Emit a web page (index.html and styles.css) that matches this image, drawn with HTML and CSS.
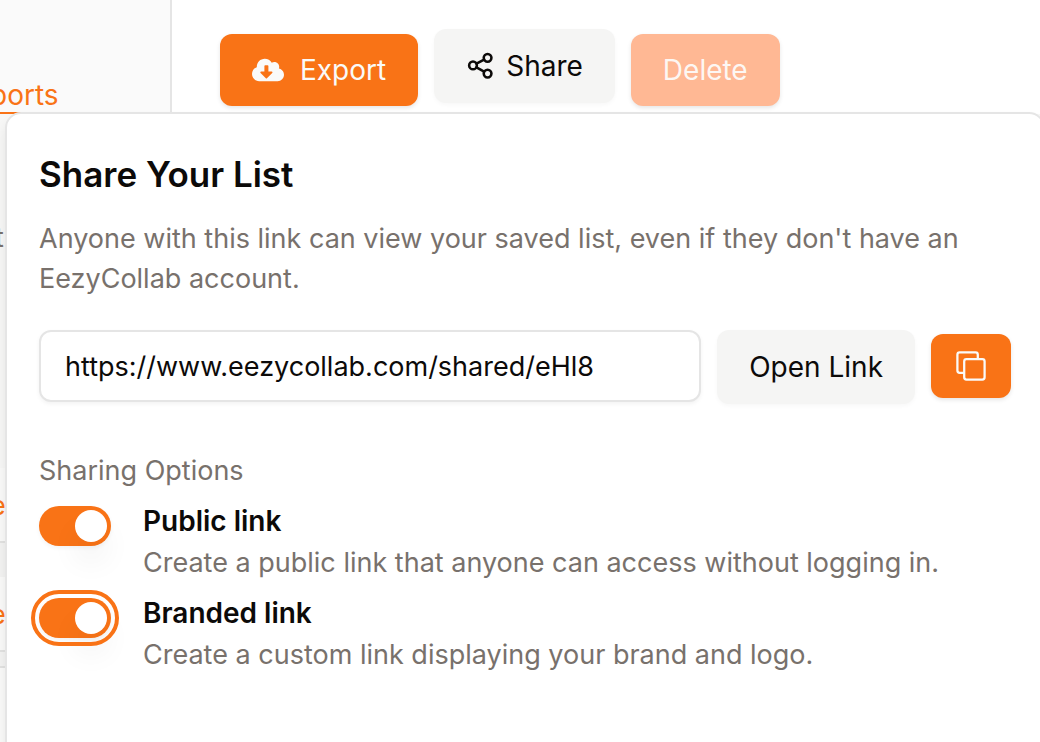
FILE: index.html
```html
<!DOCTYPE html>
<html lang="en">
<head>
<meta charset="utf-8">
<title>Share Your List</title>
<link rel="stylesheet" href="styles.css">
</head>
<body>
<div class="page">
  <header class="topbar">
    <nav class="tabs"><a class="tab" href="#">ports</a></nav>
    <div class="actions">
      <button class="btn btn-primary" type="button">
        <svg class="icon-cloud" viewBox="0 0 640 512" aria-hidden="true"><path fill="currentColor" d="M537.600 226.600c4.100-10.700 6.400-22.400 6.400-34.600 0-53-43-96-96-96-19.700 0-38.100 6-53.300 16.200C367 64.200 315.300 32 256 32c-88.400 0-160 71.600-160 160 0 2.700.1 5.400.2 8.100C40.200 219.800 0 273.200 0 336c0 79.500 64.500 144 144 144h368c70.700 0 128-57.300 128-128 0-61.900-44-113.600-102.400-125.400zm-132.900 88.700L299.300 420.700c-6.200 6.200-16.400 6.200-22.600 0L171.300 315.300c-10.100-10.100-2.900-27.300 11.300-27.300H248V176c0-8.800 7.200-16 16-16h48c8.800 0 16 7.200 16 16v112h65.400c14.200 0 21.400 17.200 11.300 27.300z"/></svg>
        Export
      </button>
      <button class="btn btn-soft btn-raised" type="button">
        <svg class="icon-share" viewBox="0 0 24 24" fill="none" stroke="currentColor" stroke-width="2.200" stroke-linecap="round" aria-hidden="true"><circle cx="18.500" cy="5" r="3.300"/><circle cx="6" cy="11.500" r="3.300"/><circle cx="18.500" cy="18.500" r="3.300"/><path d="M9 13.200l6.500 3.600M15.500 6.600L9 10"/></svg>
        Share
      </button>
      <button class="btn btn-primary btn-disabled" type="button" disabled>Delete</button>
    </div>
  </header>

  <main class="list">
    <div class="list-head">t</div>
    <div class="list-row">e</div>
    <div class="list-gap"></div>
    <div class="list-row">e</div>
    <div class="list-gap list-gap-small"></div>
    <div class="list-rest"></div>
  </main>

  <section class="popover" role="dialog" aria-labelledby="share-title">
    <h2 class="title" id="share-title">Share Your List</h2>
    <p class="lead">Anyone with this link can view your saved list, even if they don't have an EezyCollab account.</p>
    <div class="link-row">
      <input class="link-input" type="text" aria-label="Share link" value="https://www.eezycollab.com/shared/eHl8" readonly>
      <button class="btn btn-soft btn-open" type="button">Open Link</button>
      <button class="btn btn-primary btn-copy" type="button" aria-label="Copy link">
        <svg class="icon-copy" viewBox="0 0 15 15" aria-hidden="true"><path fill="currentColor" fill-rule="evenodd" clip-rule="evenodd" d="M1 9.500A1.500 1.500 0 0 0 2.500 11H4v-1H2.500a.5.5 0 0 1-.5-.5v-7a.5.5 0 0 1 .5-.5h7a.5.5 0 0 1 .5.5V4H5.500A1.500 1.500 0 0 0 4 5.500v7A1.500 1.500 0 0 0 5.500 14h7a1.500 1.500 0 0 0 1.500-1.500v-7A1.500 1.500 0 0 0 12.500 4H11V2.500A1.500 1.500 0 0 0 9.500 1h-7A1.500 1.500 0 0 0 1 2.500v7zm4-4a.5.5 0 0 1 .5-.5h7a.5.5 0 0 1 .5.5v7a.5.5 0 0 1-.5.5h-7a.5.5 0 0 1-.5-.5v-7z"/></svg>
      </button>
    </div>
    <div class="options">
      <p class="options-label">Sharing Options</p>
      <div class="option">
        <input class="switch" type="checkbox" role="switch" id="public" checked>
        <div class="option-text">
          <label class="option-name" for="public">Public link</label>
          <p class="option-note">Create a public link that anyone can access without logging in.</p>
        </div>
      </div>
      <div class="option">
        <input class="switch switch-focused" type="checkbox" role="switch" id="branded" checked>
        <div class="option-text">
          <label class="option-name" for="branded">Branded link</label>
          <p class="option-note">Create a custom link displaying your brand and logo.</p>
        </div>
      </div>
    </div>
  </section>
</div>
</body>
</html>
```

FILE: styles.css
```css
* { box-sizing: border-box; }

body {
  margin: 0;
  background: #fff;
  color: #0c0a09;
  font-family: Inter, "Liberation Sans", sans-serif;
  font-size: 27px;
  line-height: 40px;
}

h2, p { margin: 0; }

.page {
  position: relative;
  display: flex;
  flex-direction: column;
  min-height: 100vh;
  overflow: hidden;
}

.topbar {
  display: grid;
  grid-template-columns: 172px 1fr;
  height: 114px;
}

.tabs {
  display: flex;
  align-items: flex-end;
  background: #fafafa;
  border-right: 2px solid #e5e5e5;
}

.tab {
  margin-left: -10px;
  border-bottom: 2px solid #f97316;
  color: #f97316;
  font-size: 28px;
  line-height: 34px;
  text-decoration: none;
}

.actions {
  display: flex;
  align-items: flex-start;
  gap: 16px;
  padding: 34px 48px 0;
}

.btn {
  display: flex;
  align-items: center;
  justify-content: center;
  height: 72px;
  padding: 0 32px;
  border: 0;
  border-radius: 12px;
  font: inherit;
  font-size: 28px;
  white-space: nowrap;
  box-shadow: 0 2px 4px rgba(0, 0, 0, 0.1);
}

.btn-primary { gap: 16px; background: #f97316; color: #fafaf9; }
.btn-soft { gap: 12px; height: 74px; background: #f5f5f4; color: #0c0a09; box-shadow: 0 2px 4px rgba(0, 0, 0, 0.03); }
.btn-raised { margin-top: -5px; }
.btn-disabled { background: #ffb894; color: #fdf7f3; }
.btn-open { align-self: flex-start; }
.btn-copy { width: 80px; height: 64px; padding: 0; }

.icon-cloud { width: 32px; height: 26px; }
.icon-share { width: 28px; height: 28px; }
.icon-copy { width: 34px; height: 34px; }

.list {
  display: flex;
  flex: 1;
  flex-direction: column;
  background: #fafaf9;
}

.list-head { height: 354px; padding-top: 104px; margin-left: -5px; color: #78716c; background: #f7f7f6; }
.list-row { height: 75px; padding-top: 18px; text-indent: -10px; color: #f97316; border-bottom: 2px solid #e2e2e1; }
.list-gap { height: 34px; background: #f3f3f2; }
.list-gap-small { height: 16px; border-bottom: 2px solid #e2e2e1; }
.list-rest { flex: 1; }

.popover {
  position: absolute;
  inset: 112px -5px -20px 5px;
  display: flex;
  flex-direction: column;
  padding: 32px;
  background: #fff;
  border: 2px solid #e5e5e5;
  border-radius: 16px;
  box-shadow: 0 8px 12px rgba(0, 0, 0, 0.08);
}

.title { margin-bottom: 17px; font-size: 35px; font-weight: 600; line-height: 56px; }
.lead { margin-bottom: 31px; color: #78716c; }

.link-row { display: flex; align-items: center; gap: 16px; height: 72px; margin-bottom: 49px; }

.link-input {
  flex: 1;
  min-width: 0;
  height: 72px;
  padding: 0 24px;
  background: #fff;
  border: 2px solid #e5e5e5;
  border-radius: 12px;
  color: #0c0a09;
  font: inherit;
  box-shadow: 0 2px 4px rgba(0, 0, 0, 0.05);
}

.options { display: flex; flex-direction: column; gap: 10px; }
.options-label, .option-note { color: #78716c; }
.option { display: flex; align-items: flex-start; gap: 32px; }
.option-text { display: flex; flex-direction: column; gap: 2px; }
.option-name { font-size: 28px; font-weight: 600; }

.switch {
  appearance: none;
  display: flex;
  flex: none;
  align-items: center;
  justify-content: flex-end;
  width: 72px;
  height: 40px;
  margin: 5px 0 0;
  padding: 4px;
  border-radius: 20px;
  background: #f97316;
  box-shadow: 0 2px 4px rgba(0, 0, 0, 0.05);
}

.switch::before {
  content: "";
  width: 32px;
  height: 32px;
  border-radius: 50%;
  background: #fff;
  box-shadow: 0 20px 30px rgba(0, 0, 0, 0.06);
}

.switch:not(:checked) { justify-content: flex-start; background: #e5e5e5; }
.switch-focused { outline: 4px solid #f97316; outline-offset: 4px; }
```
